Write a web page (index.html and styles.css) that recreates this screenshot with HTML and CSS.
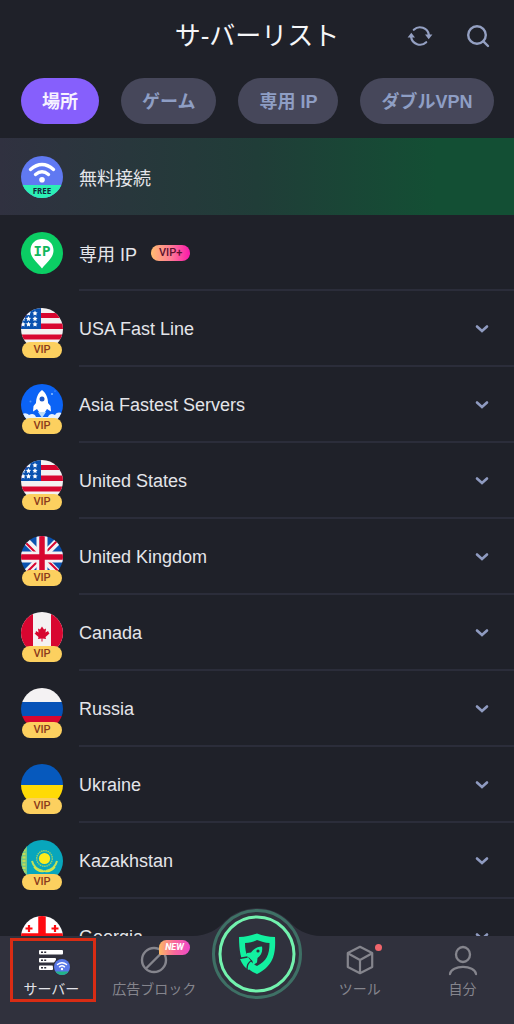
FILE: index.html
```html
<!DOCTYPE html>
<html lang="ja">
<head>
<meta charset="utf-8">
<meta name="viewport" content="width=device-width, initial-scale=1">
<title>サ-バーリスト</title>
<link rel="stylesheet" href="styles.css">
</head>
<body>
<svg class="sprite" aria-hidden="true">
  <defs>
    <clipPath id="round"><circle cx="21" cy="21" r="21"/></clipPath>
    <symbol id="flag-us" viewBox="0 0 42 42">
      <g clip-path="url(#round)">
        <path fill="#f4f1f2" d="M0 0h42v42H0z"/>
        <path fill="#d80630" d="M0 5h42v5H0zM0 15.500h42v5.500H0zM0 26.500h42v5H0zM0 37h42v5H0z"/>
        <path fill="#0a52b0" d="M0 0h20v21H0z"/>
        <g fill="#fff">
          <path id="star" d="M14 2.600l.8 1.700 1.800.2-1.300 1.300.3 1.800-1.600-.9-1.600.9.300-1.800-1.300-1.300 1.800-.2z"/>
          <use href="#star" y="5.500"/><use href="#star" y="11"/>
          <use href="#star" x="-6.500"/><use href="#star" x="-6.500" y="5.500"/><use href="#star" x="-6.500" y="11"/>
          <use href="#star" x="-12" y="5.500"/><use href="#star" x="-12" y="11"/>
        </g>
      </g>
    </symbol>
    <symbol id="chevron" viewBox="0 0 14 10">
      <path d="M2 2.500l5 4.500 5-4.500" fill="none" stroke="#8f9bc0" stroke-width="2.600" stroke-linecap="round"/>
    </symbol>
  </defs>
</svg>

<header class="header">
  <div class="title-bar">
    <h1 class="title">サ-バーリスト</h1>
    <div class="actions">
      <button class="icon-button" type="button" aria-label="更新">
        <svg width="24" height="24" viewBox="0 0 24 24" fill="none" stroke="#94a0c2" stroke-width="2.200" stroke-linecap="round">
          <path d="M5.800 5.800A9 9 0 0 1 20.900 11M18.200 18.200A9 9 0 0 1 3.100 13"/>
          <path fill="#94a0c2" stroke="none" d="M17 10.500h7.400l-3.700 4.700zM-.400 13.500h7.400l-3.700-4.700z"/>
        </svg>
      </button>
      <button class="icon-button" type="button" aria-label="検索">
        <svg width="24" height="24" viewBox="0 0 24 24" fill="none" stroke="#94a0c2" stroke-width="2.400" stroke-linecap="round">
          <circle cx="11" cy="11" r="8.800"/><path d="M17.400 17.400l4.600 4.600"/>
        </svg>
      </button>
    </div>
  </div>
  <div class="chips">
    <button class="chip chip-active" type="button">場所</button>
    <button class="chip" type="button">ゲーム</button>
    <button class="chip" type="button">専用 IP</button>
    <button class="chip" type="button">ダブルVPN</button>
  </div>
</header>

<main class="content">
  <ul class="servers" id="servers">
    <li><button class="server server-free" type="button">
      <span class="badge-icon"><svg class="flag" viewBox="0 0 42 42">
        <g clip-path="url(#round)"><path fill="#6079f2" d="M0 0h42v42H0z"/><path fill="#2cf0b4" d="M0 29h42v13H0z"/></g>
        <g fill="none" stroke="#fff" stroke-width="3.400" stroke-linecap="round"><path d="M9.500 13.500q11.500-10 23 0M14.500 18.500q6.500-5.500 13 0"/></g>
        <circle cx="21" cy="23.800" r="2.800" fill="#fff"/>
        <text class="free-text" x="21" y="38" text-anchor="middle">FREE</text>
      </svg></span>
      <span class="server-body">無料接続</span>
    </button></li>
    <li><button class="server" type="button">
      <span class="badge-icon"><svg class="flag" viewBox="0 0 42 42">
        <circle cx="21" cy="21" r="21" fill="#0bce64"/>
        <path fill="#fff" d="M21 7c-6.500 0-11.500 4.800-11.500 11.200C9.500 26 16 30 21 36.500 26 30 32.500 26 32.500 18.200 32.500 11.800 27.500 7 21 7z"/>
        <text class="ip-text" x="21" y="24" text-anchor="middle">IP</text>
      </svg></span>
      <span class="server-body">専用 IP<span class="vip-plus">VIP+</span></span>
    </button></li>
    <li><button class="server" type="button">
      <span class="badge-icon"><svg class="flag"><use href="#flag-us"/></svg><span class="vip">VIP</span></span>
      <span class="server-body">USA Fast Line<svg class="chevron"><use href="#chevron"/></svg></span>
    </button></li>
    <li><button class="server" type="button">
      <span class="badge-icon"><svg class="flag" viewBox="0 0 42 42">
        <g clip-path="url(#round)">
          <path fill="#0b63f5" d="M0 0h42v42H0z"/>
          <path fill="#e6f2ff" d="M0 32c2-4 6-3 8-1 3-2 6-1 7 2h12c1-3 4-4 7-2 2-3 5-3 8-1v12H0z"/>
          <path fill="#b8dbfa" d="M17 28l4 6 4-6z"/>
          <path fill="#fff" d="M21 6c-4 3-6 8-6 13l-2.500 3-.500 5.500 4-2.500 2 3h6l2-3 4 2.500-.500-5.500-2.500-3c0-5-2-10-6-13z"/>
          <circle cx="21" cy="15" r="2.500" fill="#1c58c8"/>
          <circle cx="31" cy="10" r="1" fill="#8fc0ff"/><circle cx="9.500" cy="17.500" r="1" fill="#4b93fa"/><circle cx="34" cy="7" r=".5" fill="#8fc0ff"/>
        </g>
      </svg><span class="vip">VIP</span></span>
      <span class="server-body">Asia Fastest Servers<svg class="chevron"><use href="#chevron"/></svg></span>
    </button></li>
    <li><button class="server" type="button">
      <span class="badge-icon"><svg class="flag"><use href="#flag-us"/></svg><span class="vip">VIP</span></span>
      <span class="server-body">United States<svg class="chevron"><use href="#chevron"/></svg></span>
    </button></li>
    <li><button class="server" type="button">
      <span class="badge-icon"><svg class="flag" viewBox="0 0 42 42">
        <g clip-path="url(#round)">
          <path fill="#0a52b0" d="M0 0h42v42H0z"/>
          <path stroke="#f4f1f2" stroke-width="7" d="M2 2l38 38M40 2L2 40"/>
          <path stroke="#d80630" stroke-width="2" d="M4 6l12 12M25 16L38 3M17 25L4 38M26 24l12 12"/>
          <path stroke="#f4f1f2" stroke-width="11" d="M21 0v42M0 21h42"/>
          <path stroke="#d80630" stroke-width="5.500" d="M21 0v42M0 21h42"/>
        </g>
      </svg><span class="vip">VIP</span></span>
      <span class="server-body">United Kingdom<svg class="chevron"><use href="#chevron"/></svg></span>
    </button></li>
    <li><button class="server" type="button">
      <span class="badge-icon"><svg class="flag" viewBox="0 0 42 42">
        <g clip-path="url(#round)">
          <path fill="#f4f1f2" d="M0 0h42v42H0z"/><path fill="#d80630" d="M0 0h12v42H0zM30 0h12v42H30z"/>
          <path fill="#d80630" d="M21 14.500l2 3 2-1-.5 4 2.500-1.500 1 2 .500.500-4 3.500.5 2-3.500-.5v3h-1v-3l-3.500.5.5-2-4-3.500 1-.5.500-2 2.500 1.500-.5-4 2 1z"/>
        </g>
      </svg><span class="vip">VIP</span></span>
      <span class="server-body">Canada<svg class="chevron"><use href="#chevron"/></svg></span>
    </button></li>
    <li><button class="server" type="button">
      <span class="badge-icon"><svg class="flag" viewBox="0 0 42 42">
        <g clip-path="url(#round)"><path fill="#f4f2f3" d="M0 0h42v14H0z"/><path fill="#0652b8" d="M0 14h42v14H0z"/><path fill="#d80630" d="M0 28h42v14H0z"/></g>
      </svg><span class="vip">VIP</span></span>
      <span class="server-body">Russia<svg class="chevron"><use href="#chevron"/></svg></span>
    </button></li>
    <li><button class="server" type="button">
      <span class="badge-icon"><svg class="flag" viewBox="0 0 42 42">
        <g clip-path="url(#round)"><path fill="#0659bd" d="M0 0h42v21H0z"/><path fill="#ffda05" d="M0 21h42v21H0z"/></g>
      </svg><span class="vip">VIP</span></span>
      <span class="server-body">Ukraine<svg class="chevron"><use href="#chevron"/></svg></span>
    </button></li>
    <li><button class="server" type="button">
      <span class="badge-icon"><svg class="flag" viewBox="0 0 42 42">
        <g clip-path="url(#round)">
          <path fill="#08a6bc" d="M0 0h42v42H0z"/>
          <path fill="#79c982" d="M0 0h6v42H0z"/>
          <path d="M3 6v30" stroke="#c4dc54" stroke-width="3" stroke-dasharray="2 1.500"/>
          <circle cx="23.500" cy="18.500" r="7.800" fill="none" stroke="#9bd269" stroke-width="1.400" stroke-dasharray="1.500 .7"/>
          <circle cx="23.500" cy="18.500" r="5.600" fill="#ffec1c"/>
          <path d="M11 21q2 8 11 10M36 21q-2 8-11 10" fill="none" stroke="#bfe05a" stroke-width="2"/>
          <path d="M13 27q5 6 10.500 4Q29 33 34 27" fill="none" stroke="#dbe640" stroke-width="1.600"/>
        </g>
      </svg><span class="vip">VIP</span></span>
      <span class="server-body">Kazakhstan<svg class="chevron"><use href="#chevron"/></svg></span>
    </button></li>
    <li><button class="server" type="button">
      <span class="badge-icon"><svg class="flag" viewBox="0 0 42 42">
        <g clip-path="url(#round)">
          <path fill="#fff" d="M0 0h42v42H0z"/><path stroke="#ff0a10" stroke-width="7.500" d="M21 0v42M0 21h42"/>
          <path stroke="#ff0a10" stroke-width="2.200" d="M8 9v7M4.500 12.500h7M34 9v7M30.500 12.500h7M8 27v7M4.500 30.500h7M34 27v7M30.500 30.500h7"/>
        </g>
      </svg><span class="vip">VIP</span></span>
      <span class="server-body">Georgia<svg class="chevron"><use href="#chevron"/></svg></span>
    </button></li>
  </ul>
</main>

<nav class="tabs">
  <svg class="tabs-hump" width="130" height="90" viewBox="0 0 130 90" aria-hidden="true">
    <path fill="#30313d" d="M0 27C16 27 26 20 33 12A46 46 0 0 1 97 12C104 20 114 27 130 27V90H0z"/>
  </svg>
  <a class="tab tab-active" href="#servers">
    <svg class="tab-icon" viewBox="0 0 32 30">
      <g fill="#fff"><rect x="4" y="5" width="24" height="4.500" rx="1"/><rect x="4" y="13" width="17" height="4.500" rx="1"/><rect x="4" y="20.500" width="14" height="4.500" rx="1"/></g>
      <path stroke="#30313d" stroke-width="1.600" d="M6 7.300h2m1.200 0h2M6 15.300h2m1.200 0h2M6 22.800h2m1.200 0h2"/>
      <circle cx="27" cy="22" r="9.200" fill="#30313d"/><circle cx="27" cy="22" r="8" fill="#5878e8"/>
      <path fill="#22b488" d="M20.400 26.500h13.200a8 8 0 0 1-13.200 0z"/>
      <path d="M22.500 19.500q4.500-3.500 9 0M24.500 21.800q2.500-2 5 0" fill="none" stroke="#fff" stroke-width="1.500" stroke-linecap="round"/>
      <circle cx="27" cy="24" r="1.200" fill="#fff"/>
    </svg>
    <span class="tab-label">サーバー</span>
  </a>
  <a class="tab" href="#adblock">
    <svg class="tab-icon" viewBox="0 0 32 30" fill="none" stroke="#85858d" stroke-width="2.400"><circle cx="16" cy="15" r="12"/><path d="M8 23.500L24.500 7"/></svg>
    <span class="new-badge">NEW</span>
    <span class="tab-label">広告ブロック</span>
  </a>
  <a class="tab tab-connect" href="#connect" aria-label="接続">
    <svg class="connect-icon" viewBox="0 0 90 90">
      <circle cx="45" cy="45" r="43.500" fill="#30313d" stroke="#3e7065" stroke-width="3"/>
      <circle cx="45" cy="45" r="37" fill="#30313d" stroke="#72f2ae" stroke-width="3"/>
      <path fill="#12f0a0" d="M27 28c7 0 12-1.500 18-3.500 6 2 11 3.500 18 3.500 1 18-2 29-18 37-5-2-9-5-12-9 -4-5-6-14-6-28z"/>
      <path fill="#30313d" d="M33 34c5 0 8.500-1.500 12-3 4 1.500 8 3 12.500 3 0 12-3 18-12.500 23-8-4-12-11-12-23z"/>
      <path fill="#12f0a0" d="M50 37.500c-5 0-8.500 3-11 6l-4 .5-2.500 4 4.500.5 3.500 3.500.5 4 4-2.500.5-4.500c3.500-2.500 5.500-6.500 4.500-11.500z"/>
      <path fill="#12f0a0" d="M28 50l8-1.500 3 3.500c-2 3-2 6-2 9-4-2-7-6-9-11z"/>
      <path fill="none" stroke="#30313d" stroke-width="1.300" d="M27 49.500l8.500-1.500M35 60c0-4 2-7 4.500-8.500"/>
      <circle cx="46" cy="42" r="1.600" fill="#30313d"/>
    </svg>
  </a>
  <a class="tab" href="#tools">
    <svg class="tab-icon" viewBox="0 0 32 30" fill="none" stroke="#85858d" stroke-width="2.200" stroke-linejoin="round"><path d="M16 1.800L28.200 8v14L16 28.200 3.800 22V8zM3.800 8.300L16 15l12.200-6.700M16 15v13"/></svg>
    <span class="dot"></span>
    <span class="tab-label">ツール</span>
  </a>
  <a class="tab" href="#me">
    <svg class="tab-icon" viewBox="0 0 32 30" fill="none" stroke="#85858d" stroke-width="2.300" stroke-linecap="round"><ellipse cx="16" cy="9.500" rx="7" ry="7.500"/><path d="M3 29C4 19.500 28 19.500 29 29"/></svg>
    <span class="tab-label">自分</span>
  </a>
</nav>
</body>
</html>
```
FILE: styles.css
```css
* {
  box-sizing: border-box;
}

body {
  margin: 0;
  height: 100vh;
  display: flex;
  flex-direction: column;
  overflow: hidden;
  background: #1f2129;
  color: #e4e5e9;
  font-family: "Liberation Sans", "Noto Sans CJK JP", sans-serif;
}

button {
  border: 0;
  padding: 0;
  background: none;
  color: inherit;
  font: inherit;
  cursor: pointer;
}

svg {
  display: block;
  overflow: visible;
}

.sprite {
  position: absolute;
  width: 0;
  height: 0;
}

.header {
  flex: none;
  padding: 14px 21px;
}

.title-bar {
  display: grid;
  grid-template-columns: 1fr auto 1fr;
  align-items: center;
  height: 44px;
  margin-bottom: 20px;
}

.title {
  grid-column: 2;
  margin: 0;
  color: #f5f6f8;
  font-size: 26px;
  font-weight: 400;
  line-height: 44px;
}

.actions {
  display: flex;
  justify-content: flex-end;
  gap: 34px;
  padding-right: 3px;
}

.chips {
  display: flex;
  gap: 22px;
  white-space: nowrap;
}

.chip {
  height: 46px;
  padding: 0 21px 2px;
  border-radius: 23px;
  background: #46475a;
  color: #8e9ec4;
  font-size: 18px;
  font-weight: 700;
}

.chip-active {
  background: #865ffc;
  color: #f6f2ff;
}

.content {
  flex: 1;
  min-height: 0;
  overflow-y: auto;
  scrollbar-width: none;
}

.servers {
  margin: 0;
  padding: 0;
  list-style: none;
}

.server {
  display: flex;
  align-items: center;
  gap: 16px;
  width: 100%;
  height: 76px;
  padding-left: 21px;
  font-size: 18px;
  text-align: left;
}

.server-free {
  height: 77px;
  background: linear-gradient(90deg, #303140 0%, #203d38 50%, #134f34 85%, #134f34 100%);
}

.server-body {
  display: flex;
  flex: 1;
  align-items: center;
  height: 100%;
  padding: 2px 25px 0 0;
  border-bottom: 2px solid #2b2d3a;
}

.server-free .server-body {
  border-color: transparent;
}

.badge-icon {
  position: relative;
  flex: none;
}

.flag {
  width: 42px;
  height: 42px;
}

.vip {
  position: absolute;
  left: 1px;
  right: 1px;
  bottom: -8px;
  height: 16px;
  border-radius: 8px;
  background: #fcd05f;
  color: #8a3b1c;
  font: 500 11px/16px Roboto, sans-serif;
  text-align: center;
}

.vip-plus {
  height: 16px;
  margin-left: 14px;
  padding: 0 8px;
  border-radius: 8px;
  background: linear-gradient(90deg, #ffbc70, #ff7c94 50%, #fb18ac);
  color: #5c1230;
  font: 500 11px/16px Roboto, sans-serif;
}

.chevron {
  width: 14px;
  height: 10px;
  margin-left: auto;
}

.free-text {
  fill: #10283a;
  font: 700 8px "Noto Sans", sans-serif;
}

.ip-text {
  fill: #10b65c;
  font: 700 14px "DejaVu Sans Mono", monospace;
}

.tabs {
  position: relative;
  flex: none;
  display: grid;
  grid-template-columns: repeat(5, 1fr);
  height: 88px;
  background: #30313d;
}

.tabs-hump {
  position: absolute;
  left: 50%;
  top: -27px;
  transform: translateX(-50%);
}

.tab {
  position: relative;
  display: flex;
  flex-direction: column;
  align-items: center;
  gap: 3px;
  padding-top: 9px;
  color: #85858d;
  font-size: 14px;
  line-height: 22px;
  text-decoration: none;
  white-space: nowrap;
}

.tab-active {
  color: #e2e2e8;
}

.tab-active::after {
  content: "";
  position: absolute;
  inset: 2px 7px 22px 10px;
  border: 3px solid #d92c14;
}

.tab-icon {
  width: 32px;
  height: 30px;
}

.tab-connect {
  padding-top: 0;
}

.connect-icon {
  width: 90px;
  height: 90px;
  margin-top: -27px;
}

.new-badge {
  position: absolute;
  left: calc(50% + 5px);
  top: 4px;
  padding: 0 6px;
  border-radius: 8px 8px 8px 2px;
  background: linear-gradient(90deg, #fcb864, #f8689c 50%, #ee48c8);
  color: #fff;
  font: italic 700 9px/15px Roboto, sans-serif;
}

.dot {
  position: absolute;
  left: calc(50% + 15px);
  top: 8px;
  width: 7px;
  height: 7px;
  border-radius: 50%;
  background: #f0656c;
}
```
